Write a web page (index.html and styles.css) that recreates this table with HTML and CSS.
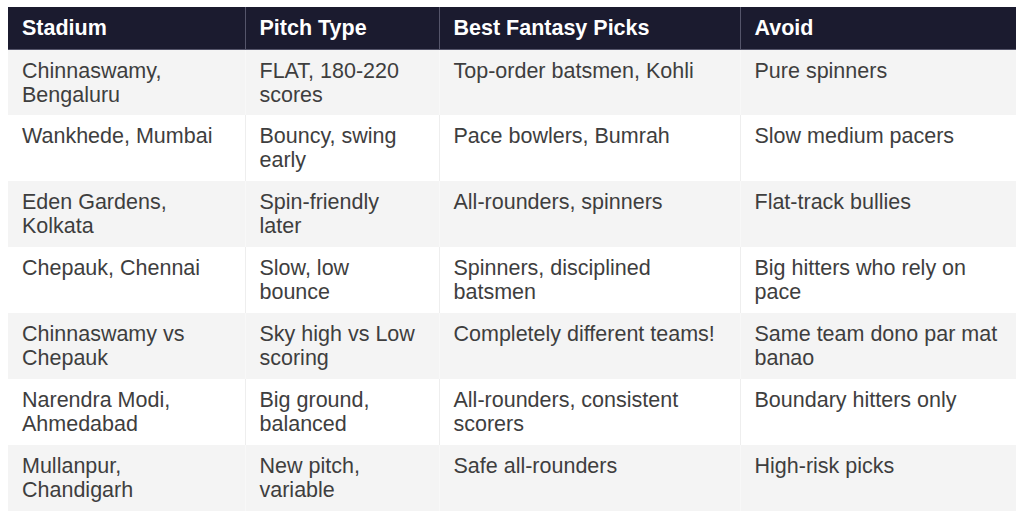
FILE: index.html
```html
<!DOCTYPE html>
<html>
<head>
<meta charset="utf-8">
<link rel="stylesheet" href="styles.css">
</head>
<body>
<table class="picks">
<colgroup>
<col class="c1"><col class="c2"><col class="c3"><col class="c4">
</colgroup>
<thead>
<tr><th>Stadium</th><th>Pitch Type</th><th>Best Fantasy Picks</th><th>Avoid</th></tr>
</thead>
<tbody>
<tr><td>Chinnaswamy, Bengaluru</td><td>FLAT, 180-220 scores</td><td>Top-order batsmen, Kohli</td><td>Pure spinners</td></tr>
<tr><td>Wankhede, Mumbai</td><td>Bouncy, swing early</td><td>Pace bowlers, Bumrah</td><td>Slow medium pacers</td></tr>
<tr><td>Eden Gardens, Kolkata</td><td>Spin-friendly later</td><td>All-rounders, spinners</td><td>Flat-track bullies</td></tr>
<tr><td>Chepauk, Chennai</td><td>Slow, low bounce</td><td>Spinners, disciplined batsmen</td><td>Big hitters who rely on pace</td></tr>
<tr><td>Chinnaswamy vs Chepauk</td><td>Sky high vs Low scoring</td><td>Completely different teams!</td><td>Same team dono par mat banao</td></tr>
<tr><td>Narendra Modi, Ahmedabad</td><td>Big ground, balanced</td><td>All-rounders, consistent scorers</td><td>Boundary hitters only</td></tr>
<tr><td>Mullanpur, Chandigarh</td><td>New pitch, variable</td><td>Safe all-rounders</td><td>High-risk picks</td></tr>
</tbody>
</table>
</body>
</html>
```
FILE: styles.css
```css
html, body { margin: 0; padding: 0; background: #fff; }
body { padding: 7px 8px 0 8px; font-family: "Liberation Sans", Arial, sans-serif; }
.picks { width: 1008px; border-collapse: collapse; table-layout: fixed; font-size: 21.5px; line-height: 24px; }
.c1 { width: 237px; }
.c2 { width: 194px; }
.c3 { width: 301px; }
.c4 { width: 276px; }
.picks th { background: #1b1b2f; color: #fff; font-weight: bold; text-align: left; height: 42px; padding: 0 14px; box-sizing: border-box; border-left: 1px solid #55556a; border-bottom: 1px solid #55556a; vertical-align: middle; }
.picks th:first-child { border-left: none; }
.picks td { color: #3e3e3e; vertical-align: top; height: 66px; box-sizing: border-box; padding: 9px 14px 0 14px; border-left: 1px solid #f8f8f8; }
.picks td:first-child { border-left: none; }
.picks tbody tr:nth-child(odd) td { background: #f4f4f4; }
.picks tbody tr:nth-child(even) td { background: #fff; }
.picks tbody tr:nth-child(even) td + td { border-left-color: #eeeeee; }
```
